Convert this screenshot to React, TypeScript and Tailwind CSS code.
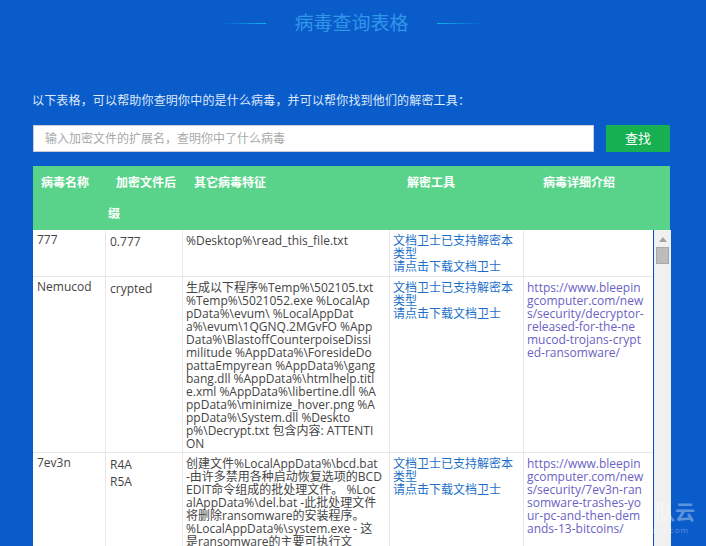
const body = '"Open Sans", "Noto Sans CJK SC", sans-serif';

const tool = ['文档卫士已支持解密本', '类型', '请点击下载文档卫士'];

const rows = [
  {
    name: '777',
    ext: ['0.777'],
    traits: ['%Desktop%\\read_this_file.txt'],
    link: [] as string[],
    height: 'h-[47px]',
  },
  {
    name: 'Nemucod',
    ext: ['crypted'],
    traits: [
      '生成以下程序%Temp%\\502105.txt',
      '%Temp%\\5021052.exe %LocalAp',
      'pData%\\evum\\ %LocalAppDat',
      'a%\\evum\\1QGNQ.2MGvFO %App',
      'Data%\\BlastoffCounterpoiseDissi',
      'militude %AppData%\\ForesideDo',
      'pattaEmpyrean %AppData%\\gang',
      'bang.dll %AppData%\\htmlhelp.titl',
      'e.xml %AppData%\\libertine.dll %A',
      'ppData%\\minimize_hover.png %A',
      'ppData%\\System.dll %Deskto',
      'p%\\Decrypt.txt 包含内容: ATTENTI',
      'ON',
    ],
    link: [
      'https://www.bleepin',
      'gcomputer.com/new',
      's/security/decryptor-',
      'released-for-the-ne',
      'mucod-trojans-crypt',
      'ed-ransomware/',
    ],
    height: 'h-[176px]',
  },
  {
    name: '7ev3n',
    ext: ['R4A', 'R5A'],
    traits: [
      '创建文件%LocalAppData%\\bcd.bat',
      '-由许多禁用各种启动恢复选项的BCD',
      'EDIT命令组成的批处理文件。 %Loc',
      'alAppData%\\del.bat -此批处理文件',
      '将删除ransomware的安装程序。',
      '%LocalAppData%\\system.exe - 这',
      '是ransomware的主要可执行文',
    ],
    link: [
      'https://www.bleepin',
      'gcomputer.com/new',
      's/security/7ev3n-ran',
      'somware-trashes-yo',
      'ur-pc-and-then-dem',
      'ands-13-bitcoins/',
    ],
    height: 'h-[176px]',
  },
];

const Lines = ({ lines }: { lines: string[] }) => (
  <>
    {lines.map((line, i) => (
      <div key={i} className="whitespace-nowrap">
        {line}
      </div>
    ))}
  </>
);

const App = () => {
  return (
    <div
      className="relative h-[546px] w-[706px] overflow-hidden bg-[#0b5ccb] pl-[33px]"
      style={{ fontFamily: body }}
    >
      <div className="flex h-[47px] w-[637px] items-center justify-center">
        <div className="h-px w-[44px] bg-gradient-to-r from-transparent to-[#0cb4f0]" />
        <h1 className="mx-[28px] text-[19px] leading-none font-normal text-[#2f97e8]">病毒查询表格</h1>
        <div className="h-px w-[44px] bg-gradient-to-r from-[#0cb4f0] to-transparent" />
      </div>

      <p className="mt-[45px] -ml-px h-[18px] text-[12px] leading-[18px] tracking-[0.17px] text-[#dbe9fa]">
        以下表格，可以帮助你查明你中的是什么病毒，并可以帮你找到他们的解密工具：
      </p>

      <div className="mt-[15px] flex w-[637px] justify-between">
        <input
          readOnly
          placeholder="输入加密文件的扩展名，查明你中了什么病毒"
          className="h-[27px] w-[561px] border border-[#c8cdd8] bg-white pl-[11px] text-[12px] outline-none placeholder:text-[#a9a9a9]"
        />
        <button className="h-[27px] w-[64px] bg-[#16b053] text-[13px] text-white">查找</button>
      </div>

      <div className="mt-[14px] flex h-[64px] w-[637px] bg-[#59d38a] pt-px text-[12px] leading-[31px] font-bold text-white">
        <div className="w-[72px] pl-[8px]">病毒名称</div>
        <div className="w-[89px] pl-[3px]">
          <div className="pl-[8px]">加密文件后</div>
          <div>缀</div>
        </div>
        <div className="w-[213px]">其它病毒特征</div>
        <div className="w-[136px]">解密工具</div>
        <div className="flex-1">病毒详细介绍</div>
      </div>

      <div className="flex h-[316px] w-[638px] overflow-hidden">
        <table className="h-fit w-[620px] table-fixed border-separate border-spacing-0 bg-white text-[12px] leading-[13px] text-[#444444]">
          <colgroup>
            <col className="w-[73px]" />
            <col className="w-[77px]" />
            <col className="w-[207px]" />
            <col className="w-[134px]" />
            <col className="w-[129px]" />
          </colgroup>
          <tbody>
            {rows.map((row) => (
              <tr key={row.name} className={`${row.height} align-top`}>
                <td className="border-r border-b border-[#e8e8e8] pt-[2px] pl-[4px]">
                  <div className="leading-[15px]">{row.name}</div>
                </td>
                <td className="border-r border-b border-[#e8e8e8] pt-[3px] pl-[4px]">
                  {row.ext.map((ext) => (
                    <div key={ext} className="leading-[17px]">
                      {ext}
                    </div>
                  ))}
                </td>
                <td className="border-r border-b border-[#e8e8e8] pt-[4px] pl-[3px]">
                  <Lines lines={row.traits} />
                </td>
                <td className="border-r border-b border-[#e8e8e8] pt-[4px] pl-[3px] text-[#1c6fc9]">
                  <Lines lines={tool} />
                </td>
                <td className="border-b border-[#e8e8e8] pt-[4px] pl-[3px] text-[#6a62c4]">
                  <Lines lines={row.link} />
                </td>
              </tr>
            ))}
          </tbody>
        </table>
        <div className="flex w-[18px] flex-none flex-col items-center border-l border-[#0b4fb5] bg-[#f0f0f0]">
          <svg width="8" height="5" viewBox="0 0 8 5" className="mt-[7px]">
            <path d="M4 0 8 5H0Z" fill="#a3a3a3" />
          </svg>
          <div className="mt-[5px] h-[17px] w-[13px] border border-[#a8a8a8] bg-[#bcbcbc]" />
        </div>
      </div>

      <div className="absolute top-[501px] left-[652px] text-white/35">
        <div className="pl-[3px] text-[20px] leading-[24px] font-bold">队云</div>
        <div className="text-[8px] leading-[9px] tracking-[1px]">oui.com</div>
      </div>
    </div>
  );
};

export default App;
